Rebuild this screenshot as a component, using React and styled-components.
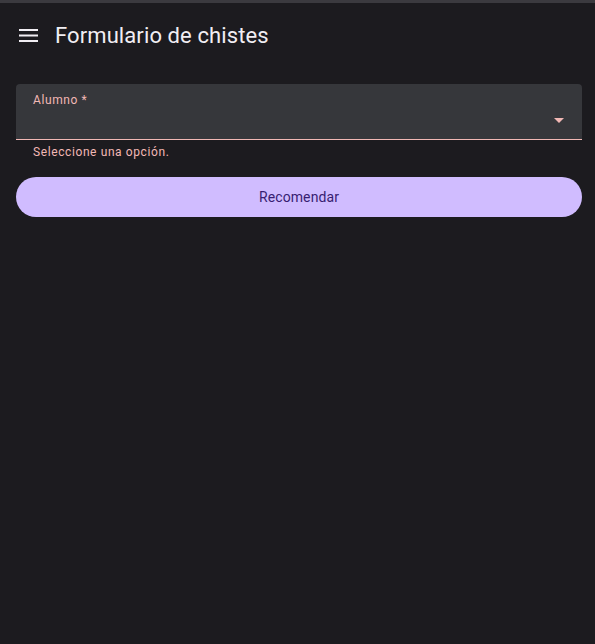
import React from "react";
import styled, { createGlobalStyle } from "styled-components";

const GlobalStyle = createGlobalStyle`
  html, body {
    margin: 0;
    padding: 0;
    background: #1c1b1f;
    font-family: Roboto, "Liberation Sans", sans-serif;
  }
`;

const Page = styled.div`
  min-height: 644px;
  background: #1c1b1f;
  border-top: 3px solid #3b3a3f;
  box-sizing: border-box;
`;

const Toolbar = styled.header`
  height: 64px;
  display: flex;
  align-items: center;
  padding: 0 16px 0 18px;
  gap: 16px;
  color: #f1eef3;
`;

const MenuButton = styled.button`
  width: 21px;
  height: 24px;
  padding: 0;
  border: none;
  background: transparent;
  display: flex;
  align-items: center;
  justify-content: center;
`;

const Title = styled.h1`
  margin: 0;
  font-size: 22px;
  font-weight: 400;
  letter-spacing: 0.1px;
`;

const Form = styled.form`
  padding: 17px 13px 0 16px;
  display: flex;
  flex-direction: column;
`;

const Field = styled.div`
  height: 56px;
  background: #36373b;
  border-radius: 4px 4px 0 0;
  border-bottom: 1px solid #f2b8b5;
  box-sizing: border-box;
  display: flex;
  align-items: flex-start;
  justify-content: space-between;
  padding: 9px 16px 0 17px;
`;

const Label = styled.span`
  font-size: 12px;
  color: #f2b8b5;
  letter-spacing: 0.6px;
`;

const Arrow = styled.span`
  width: 0;
  height: 0;
  border-left: 5px solid transparent;
  border-right: 5px solid transparent;
  border-top: 5px solid #f2b8b5;
  margin-top: 25px;
  margin-right: 2px;
`;

const Helper = styled.div`
  font-size: 12px;
  color: #f2b8b5;
  letter-spacing: 0.6px;
  padding: 5px 17px 0;
  height: 32px;
  box-sizing: border-box;
`;

const Button = styled.button`
  height: 40px;
  border: none;
  border-radius: 20px;
  background: #d0bcff;
  color: #381e72;
  font-family: Roboto, "Liberation Sans", sans-serif;
  font-size: 14px;
  font-weight: 400;
  letter-spacing: 0.1px;
  cursor: pointer;
  margin-top: 5px;
`;

export default function App() {
  return (
    <>
      <GlobalStyle />
      <Page>
        <Toolbar>
          <MenuButton type="button" aria-label="menu">
            <svg width="19" height="13" viewBox="0 0 19 13">
              <rect x="0" y="0" width="19" height="2" fill="#f1eef3" />
              <rect x="0" y="5.5" width="19" height="2" fill="#f1eef3" />
              <rect x="0" y="11" width="19" height="2" fill="#f1eef3" />
            </svg>
          </MenuButton>
          <Title>Formulario de chistes</Title>
        </Toolbar>
        <Form onSubmit={(e) => e.preventDefault()}>
          <Field>
            <Label>Alumno *</Label>
            <Arrow />
          </Field>
          <Helper>Seleccione una opción.</Helper>
          <Button type="submit">Recomendar</Button>
        </Form>
      </Page>
    </>
  );
}
